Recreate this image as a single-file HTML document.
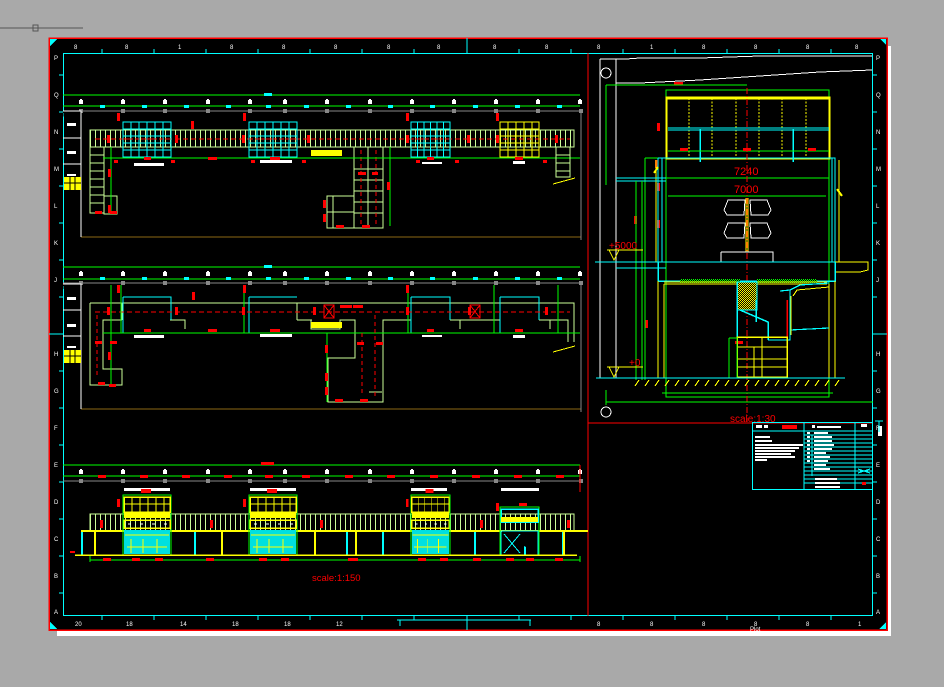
<!DOCTYPE html>
<html><head><meta charset="utf-8"><style>
html,body{margin:0;padding:0;background:#a9a9a9;width:944px;height:687px;overflow:hidden}
svg{display:block}
text{font-family:"Liberation Sans",sans-serif}
</style></head><body>
<svg width="944" height="687" viewBox="0 0 944 687" xmlns="http://www.w3.org/2000/svg" shape-rendering="crispEdges">
<defs>
<g id="gm"><rect x="-2" y="-2" width="4" height="4" fill="#fff"/><rect x="-1" y="-3" width="2" height="1" fill="#fff"/></g>
<g id="cab">
 <rect x="0" y="0" width="48" height="35" fill="none" stroke="#00ffff" stroke-width="1.2"/>
 <path d="M8 0V35M16 0V35M24 0V35M32 0V35M40 0V35M0 7H48M0 14H48M0 21H48M0 28H48" stroke="#00ffff" stroke-width="1"/>
 <path d="M0 17H48" stroke="#ff0000" stroke-dasharray="4 2"/>
</g>
<g id="ecab">
 <rect x="0" y="0" width="48" height="60" fill="none" stroke="#00ff00"/>
 <rect x="1" y="2" width="46" height="15" fill="none" stroke="#ffff00" stroke-width="1.5"/>
 <path d="M9 2V17M17 2V17M25 2V17M33 2V17M41 2V17M1 9H47" stroke="#ffff00"/>
 <rect x="1" y="18" width="46" height="5" fill="#ffff00"/>
 <rect x="1" y="25" width="46" height="8" fill="none" stroke="#ffff00" stroke-width="1.5"/>
 <path d="M5 29h3M17 29h3M29 29h3M41 29h3" stroke="#fff"/>
 <rect x="1" y="35" width="46" height="24" fill="#00e0e0"/>
 <path d="M4 52H44M8 44V58M20 44V58M34 44V58M2 40H46" stroke="#ffff00"/>
 <rect x="-6" y="4" width="3" height="8" fill="#ff0000"/>
 <rect x="18" y="-6" width="10" height="4" fill="#ff0000"/>
</g>
<pattern id="hatch" width="5" height="60" patternUnits="userSpaceOnUse"><rect width="5" height="60" fill="#000"/><rect width="1" height="60" fill="#ccff99"/></pattern>
<pattern id="chk" width="2" height="2" patternUnits="userSpaceOnUse"><rect width="2" height="2" fill="#000"/><rect width="1" height="1" fill="#00ff00"/><rect x="1" y="1" width="1" height="1" fill="#00ff00"/></pattern>
<pattern id="chky" width="2" height="2" patternUnits="userSpaceOnUse"><rect width="2" height="2" fill="#000"/><rect width="1" height="1" fill="#ffff00"/><rect x="1" y="1" width="1" height="1" fill="#ffff00"/></pattern>
</defs>

<line x1="0" y1="28" x2="83" y2="28" stroke="#555" stroke-width="1"/>
<rect x="33" y="25" width="5" height="6" fill="none" stroke="#555"/>

<rect x="57" y="46" width="834" height="590" fill="#fff"/>
<rect x="49" y="38" width="838" height="592" fill="#000"/>
<path d="M49 38H887V630H49Z" fill="none" stroke="#ff0000" stroke-width="1.5"/>
<polygon points="50,39 57,39 50,46" fill="#00ffff"/>
<polygon points="886,629 879,629 886,622" fill="#00ffff"/>
<polygon points="880,39 886,39 886,45" fill="#00ffff"/>
<polygon points="50,629 50,622 57,629" fill="#00ffff"/>

<rect x="63.5" y="53.5" width="809" height="562" fill="none" stroke="#00ffff" stroke-width="1.2"/>
<path d="M467 38V53M467 616V630M49 334H63M873 334H887" stroke="#00ffff"/>
<g stroke="#00ffff">
<path d="M102 49V53M154 49V53M206 49V53M258 49V53M310 49V53M362 49V53M414 49V53M519 49V53M571 49V53M623 49V53M675 49V53M727 49V53M779 49V53M831 49V53"/>
<path d="M102 616V620M154 616V620M206 616V620M258 616V620M310 616V620M362 616V620M414 616V620M519 616V620M571 616V620M623 616V620M675 616V620M727 616V620M779 616V620M831 616V620"/>
<path d="M59 75H63M59 112H63M59 149H63M59 186H63M59 223H63M59 260H63M59 297H63M59 371H63M59 408H63M59 445H63M59 482H63M59 519H63M59 556H63M59 593H63"/>
<path d="M873 75H877M873 112H877M873 149H877M873 186H877M873 223H877M873 260H877M873 297H877M873 371H877M873 408H877M873 445H877M873 482H877M873 519H877M873 556H877M873 593H877"/>
<path d="M397 620H531M400 620V626M530 620V626M467 616V630"/>
</g>
<g fill="#fff" font-size="6">
<text x="74" y="49">8</text><text x="125" y="49">8</text><text x="178" y="49">1</text><text x="230" y="49">8</text><text x="282" y="49">8</text><text x="334" y="49">8</text><text x="387" y="49">8</text><text x="437" y="49">8</text><text x="493" y="49">8</text><text x="545" y="49">8</text><text x="597" y="49">8</text><text x="650" y="49">1</text><text x="702" y="49">8</text><text x="754" y="49">8</text><text x="806" y="49">8</text><text x="855" y="49">8</text>
<text x="75" y="626">20</text><text x="126" y="626">18</text><text x="180" y="626">14</text><text x="232" y="626">18</text><text x="284" y="626">18</text><text x="336" y="626">12</text><text x="597" y="626">8</text><text x="650" y="626">8</text><text x="702" y="626">8</text><text x="754" y="626">8</text><text x="806" y="626">8</text><text x="858" y="626">1</text>
<text x="54" y="60">P</text><text x="54" y="97">Q</text><text x="54" y="134">N</text><text x="54" y="171">M</text><text x="54" y="208">L</text><text x="54" y="245">K</text><text x="54" y="282">J</text><text x="54" y="356">H</text><text x="54" y="393">G</text><text x="54" y="430">F</text><text x="54" y="467">E</text><text x="54" y="504">D</text><text x="54" y="541">C</text><text x="54" y="578">B</text><text x="54" y="614">A</text>
<text x="876" y="60">P</text><text x="876" y="97">Q</text><text x="876" y="134">N</text><text x="876" y="171">M</text><text x="876" y="208">L</text><text x="876" y="245">K</text><text x="876" y="282">J</text><text x="876" y="356">H</text><text x="876" y="393">G</text><text x="876" y="430">F</text><text x="876" y="467">E</text><text x="876" y="504">D</text><text x="876" y="541">C</text><text x="876" y="578">B</text><text x="876" y="614">A</text>
<text x="750" y="631">Plot</text>
</g>

<path d="M588 53V616M588 423H873" stroke="#ff0000" stroke-width="1.2"/>

<g>
<path d="M63 95H580M63 106H580" stroke="#00ff00"/>
<rect x="264" y="93" width="8" height="3" fill="#00ffff"/>
<path d="M63 111H581" stroke="#888"/>
<path d="M81 237H581" stroke="#8b6914"/>
<path d="M581 111V240" stroke="#888"/>
<g id="gridrow">
<use href="#gm" x="81" y="102"/><use href="#gm" x="123" y="102"/><use href="#gm" x="165" y="102"/><use href="#gm" x="208" y="102"/><use href="#gm" x="250" y="102"/><use href="#gm" x="285" y="102"/><use href="#gm" x="327" y="102"/><use href="#gm" x="370" y="102"/><use href="#gm" x="412" y="102"/><use href="#gm" x="454" y="102"/><use href="#gm" x="496" y="102"/><use href="#gm" x="538" y="102"/><use href="#gm" x="580" y="102"/>
<g fill="#00ffff"><rect x="100" y="105" width="5" height="3"/><rect x="142" y="105" width="5" height="3"/><rect x="184" y="105" width="5" height="3"/><rect x="226" y="105" width="5" height="3"/><rect x="266" y="105" width="5" height="3"/><rect x="304" y="105" width="5" height="3"/><rect x="346" y="105" width="5" height="3"/><rect x="388" y="105" width="5" height="3"/><rect x="430" y="105" width="5" height="3"/><rect x="473" y="105" width="5" height="3"/><rect x="515" y="105" width="5" height="3"/><rect x="557" y="105" width="5" height="3"/></g>
<g fill="#888"><rect x="79" y="109" width="4" height="4"/><rect x="121" y="109" width="4" height="4"/><rect x="163" y="109" width="4" height="4"/><rect x="206" y="109" width="4" height="4"/><rect x="248" y="109" width="4" height="4"/><rect x="283" y="109" width="4" height="4"/><rect x="325" y="109" width="4" height="4"/><rect x="368" y="109" width="4" height="4"/><rect x="410" y="109" width="4" height="4"/><rect x="452" y="109" width="4" height="4"/><rect x="494" y="109" width="4" height="4"/><rect x="536" y="109" width="4" height="4"/><rect x="579" y="109" width="4" height="4"/></g>
</g>
<path d="M63 111H81V237M63 138H81M63 164H81M63 164H81" stroke="#fff"/>
<rect x="64" y="177" width="17" height="13" fill="#ffff00"/>
<path d="M70 177V190M75 177V190M64 183H81" stroke="#000"/>
<g fill="#fff"><rect x="67" y="123" width="9" height="3"/><rect x="67" y="151" width="9" height="3"/><rect x="67" y="174" width="9" height="2"/></g>
<rect x="90" y="130" width="484" height="17" fill="url(#hatch)" stroke="#ccff99"/>
<path d="M95 139H570" stroke="#ff0000" stroke-dasharray="5 3"/>
<rect x="90" y="147" width="14" height="66" fill="none" stroke="#ccff99"/>
<path d="M90 155H104M90 163H104M90 171H104M90 179H104M90 187H104M90 195H104M90 203H104" stroke="#ccff99"/>
<rect x="104" y="196" width="13" height="18" fill="none" stroke="#ccff99"/>
<path d="M111 147V213" stroke="#00ff00"/>
<rect x="354" y="147" width="29" height="81" fill="none" stroke="#ccff99"/>
<path d="M354 158H383M354 169H383M354 180H383M354 191H383M354 202H383M354 213H383M368 147V228" stroke="#ccff99"/>
<rect x="327" y="196" width="27" height="32" fill="none" stroke="#ccff99"/>
<path d="M327 212H354M333 196V228" stroke="#ccff99"/>
<path d="M390 147V226" stroke="#00ff00"/>
<path d="M361 150V225M376 150V225" stroke="#ff0000" stroke-dasharray="4 3"/>
<rect x="311" y="150" width="31" height="6" fill="#ffff00"/>
<path d="M103 158H580" stroke="#00ff00"/>
<use href="#cab" x="123" y="122"/><use href="#cab" x="249" y="122"/>
<g transform="translate(411 122) scale(0.81 1)"><use href="#cab"/></g>
<rect x="500" y="122" width="39" height="35" fill="none" stroke="#ffff00" stroke-width="1.2"/>
<path d="M508 122V157M516 122V157M524 122V157M532 122V157M500 129H539M500 136H539M500 143H539M500 150H539" stroke="#ffff00"/>
<rect x="556" y="147" width="14" height="30" fill="none" stroke="#ccff99"/>
<path d="M556 155H570M556 163H570M556 171H570" stroke="#ccff99"/>
<g fill="#ff0000">
<rect x="117" y="113" width="3" height="8"/><rect x="243" y="113" width="3" height="8"/><rect x="406" y="113" width="3" height="8"/><rect x="496" y="113" width="3" height="8"/><rect x="191" y="121" width="3" height="8"/>
<rect x="107" y="135" width="3" height="8"/><rect x="175" y="135" width="3" height="8"/><rect x="242" y="135" width="3" height="8"/><rect x="307" y="135" width="3" height="8"/><rect x="406" y="135" width="3" height="8"/><rect x="467" y="135" width="3" height="8"/><rect x="496" y="135" width="3" height="8"/><rect x="555" y="135" width="3" height="8"/>
<rect x="144" y="157" width="7" height="3"/><rect x="208" y="157" width="9" height="3"/><rect x="270" y="157" width="10" height="3"/><rect x="427" y="157" width="7" height="3"/><rect x="515" y="157" width="8" height="3"/>
<rect x="114" y="160" width="4" height="3"/><rect x="171" y="160" width="4" height="3"/><rect x="251" y="160" width="4" height="3"/><rect x="302" y="160" width="4" height="3"/><rect x="416" y="160" width="4" height="3"/><rect x="455" y="160" width="4" height="3"/><rect x="543" y="160" width="4" height="3"/>
<rect x="108" y="169" width="3" height="8"/><rect x="108" y="205" width="3" height="8"/><rect x="95" y="211" width="7" height="3"/><rect x="110" y="211" width="7" height="3"/>
<rect x="336" y="225" width="8" height="3"/><rect x="362" y="225" width="8" height="3"/><rect x="323" y="200" width="3" height="8"/><rect x="323" y="214" width="3" height="8"/><rect x="387" y="182" width="3" height="8"/><rect x="358" y="172" width="8" height="3"/><rect x="372" y="172" width="6" height="3"/>
</g>
<g fill="#fff"><rect x="134" y="163" width="30" height="3"/><rect x="260" y="160" width="32" height="3"/><rect x="422" y="162" width="20" height="2"/><rect x="513" y="161" width="12" height="3"/></g>
<path d="M553 184L575 178" stroke="#ffff00"/>
</g>

<g>
<path d="M63 267H580M63 279H580" stroke="#00ff00"/>
<rect x="264" y="265" width="8" height="3" fill="#00ffff"/>
<path d="M63 283H581" stroke="#888"/>
<path d="M81 409H581" stroke="#8b6914"/>
<path d="M581 283V412" stroke="#888"/>
<use href="#gridrow" y="172"/>
<path d="M63 284H81V409M63 310H81M63 336H81" stroke="#fff"/>
<rect x="64" y="350" width="17" height="13" fill="#ffff00"/>
<path d="M70 350V363M75 350V363M64 356H81" stroke="#000"/>
<g fill="#fff"><rect x="67" y="297" width="9" height="3"/><rect x="67" y="324" width="9" height="3"/><rect x="67" y="346" width="9" height="2"/></g>
<g fill="none" stroke="#ccff99" stroke-width="1.2">
<path d="M90 303H574V342"/>
<path d="M90 303V385H122V369H103V320H122"/>
<path d="M170 320H185V329M122 320V303"/>
<path d="M297 303V320M297 320H312M311 320V329H340V320H355V358H328V402H383V320H395"/>
<path d="M382 392H369"/>
<path d="M395 320H411M450 320H460V329M460 320H500M539 320H550V329M550 320H568V342"/>
</g>
<path d="M123 297H171V320M249 297H297M411 297H450V320M500 297H539V320" stroke="#00ffff" fill="none"/>
<path d="M123 297V333H171M249 297V333H297M411 297V333H450M500 297V333H539" stroke="#00ffff" fill="none"/>
<path d="M95 312H570" stroke="#ff0000" stroke-dasharray="5 3"/>
<path d="M103 333H580" stroke="#00ff00"/>
<path d="M111 285V385M327 333V402M121 285V333M244 285V333M408 285V333M494 285V333M558 285V333" stroke="#00ff00"/>
<path d="M97 315V378M375 315V397M362 333V395" stroke="#ff0000" stroke-dasharray="4 3"/>
<rect x="311" y="322" width="31" height="6" fill="#ffff00"/>
<rect x="324" y="305" width="10" height="13" fill="none" stroke="#ff0000"/>
<path d="M324 305L334 318M334 305L324 318" stroke="#ff0000"/>
<rect x="470" y="305" width="10" height="13" fill="none" stroke="#ff0000"/>
<path d="M470 305L480 318M480 305L470 318" stroke="#ff0000"/>
<g fill="#ff0000">
<rect x="117" y="285" width="3" height="8"/><rect x="243" y="285" width="3" height="8"/><rect x="406" y="285" width="3" height="8"/><rect x="192" y="292" width="3" height="8"/>
<rect x="107" y="307" width="3" height="8"/><rect x="175" y="307" width="3" height="8"/><rect x="242" y="307" width="3" height="8"/><rect x="313" y="307" width="3" height="8"/><rect x="406" y="307" width="3" height="8"/><rect x="468" y="307" width="3" height="8"/><rect x="545" y="307" width="3" height="8"/>
<rect x="340" y="305" width="12" height="3"/><rect x="353" y="305" width="10" height="3"/>
<rect x="144" y="329" width="7" height="3"/><rect x="208" y="329" width="9" height="3"/><rect x="270" y="329" width="10" height="3"/><rect x="427" y="329" width="7" height="3"/><rect x="515" y="329" width="8" height="3"/>
<rect x="95" y="341" width="7" height="3"/><rect x="110" y="341" width="7" height="3"/><rect x="357" y="342" width="7" height="3"/><rect x="376" y="342" width="7" height="3"/>
<rect x="108" y="352" width="3" height="8"/><rect x="98" y="382" width="7" height="3"/><rect x="109" y="384" width="7" height="3"/>
<rect x="325" y="345" width="3" height="8"/><rect x="325" y="373" width="3" height="8"/><rect x="325" y="387" width="3" height="8"/><rect x="335" y="399" width="8" height="3"/><rect x="360" y="399" width="8" height="3"/>
</g>
<g fill="#fff"><rect x="134" y="335" width="30" height="3"/><rect x="260" y="334" width="32" height="3"/><rect x="422" y="335" width="20" height="2"/><rect x="513" y="335" width="12" height="3"/></g>
<path d="M553 352L575 346" stroke="#ffff00"/>
</g>

<g>
<path d="M63 465H580M63 476H580" stroke="#00ff00"/>
<rect x="261" y="462" width="13" height="3" fill="#ff0000"/>
<path d="M63 481H581" stroke="#888"/>
<use href="#gridrow" y="370"/>
<g fill="#ff0000"><rect x="98" y="475" width="8" height="3"/><rect x="140" y="475" width="8" height="3"/><rect x="182" y="475" width="8" height="3"/><rect x="224" y="475" width="8" height="3"/><rect x="265" y="475" width="8" height="3"/><rect x="302" y="475" width="8" height="3"/><rect x="345" y="475" width="8" height="3"/><rect x="387" y="475" width="8" height="3"/><rect x="430" y="475" width="8" height="3"/><rect x="472" y="475" width="8" height="3"/><rect x="514" y="475" width="8" height="3"/><rect x="556" y="475" width="8" height="3"/></g>
<g fill="#fff"><rect x="124" y="488" width="46" height="3"/><rect x="250" y="488" width="46" height="3"/><rect x="411" y="488" width="36" height="3"/><rect x="501" y="488" width="38" height="3"/></g>
<rect x="90" y="514" width="484" height="17" fill="url(#hatch)" stroke="#ccff99"/>
<rect x="81" y="530" width="507" height="2" fill="#ffff00"/>
<g stroke-width="2"><path d="M82 532V555M195 532V555M347 532V555M383 532V555M475 532V555M525 532V555M563 532V555" stroke="#00ffff"/><path d="M95 532V555M222 532V555M315 532V555M356 532V555M564 532V555" stroke="#ffff00"/></g>
<use href="#ecab" x="123" y="495"/><use href="#ecab" x="249" y="495"/>
<g transform="translate(411 495) scale(0.81 1)"><use href="#ecab"/></g>
<rect x="500" y="507" width="39" height="48" fill="none" stroke="#00ff00"/>
<rect x="501" y="509" width="37" height="13" fill="none" stroke="#00ffff" stroke-width="1.5"/>
<rect x="501" y="517" width="37" height="5" fill="#ffff00"/>
<path d="M501 531H538V555M501 531V555M504 534L520 553M520 534L504 553" stroke="#00ffff"/>
<path d="M75 555H577" stroke="#ffff00" stroke-width="1.5"/>
<path d="M90 560H580M90 556V562M580 556V562" stroke="#00ff00"/>
<g fill="#ff0000"><rect x="103" y="558" width="8" height="3"/><rect x="132" y="558" width="8" height="3"/><rect x="155" y="558" width="8" height="3"/><rect x="206" y="558" width="8" height="3"/><rect x="259" y="558" width="8" height="3"/><rect x="281" y="558" width="8" height="3"/><rect x="348" y="558" width="10" height="3"/><rect x="418" y="558" width="8" height="3"/><rect x="440" y="558" width="8" height="3"/><rect x="473" y="558" width="8" height="3"/><rect x="506" y="558" width="8" height="3"/><rect x="526" y="558" width="8" height="3"/><rect x="555" y="558" width="8" height="3"/><rect x="70" y="551" width="5" height="2"/></g>
<g fill="#ff0000"><rect x="100" y="520" width="3" height="8"/><rect x="210" y="520" width="3" height="8"/><rect x="320" y="520" width="3" height="8"/><rect x="480" y="520" width="3" height="8"/><rect x="567" y="520" width="3" height="8"/><rect x="496" y="503" width="3" height="8"/><rect x="519" y="503" width="8" height="3"/></g>
<path d="M580 465V492" stroke="#ff0000"/>
<text x="312" y="581" fill="#ff0000" font-size="9.5">scale:1:150</text>
</g>

<g fill="none">
<path d="M600 59V378M616 59V378" stroke="#fff"/>
<path d="M600 59H626L640 58H700L760 56H872" stroke="#fff"/>
<path d="M616 83H640L700 80L760 76L820 72L872 70" stroke="#fff"/>
<circle cx="606" cy="73" r="5" stroke="#fff"/>
<circle cx="606" cy="412" r="5" stroke="#fff"/>
<rect x="674" y="82" width="9" height="3" fill="#ff0000" stroke="none"/>
<path d="M606 85H747M606 85V185" stroke="#00ff00"/>
<rect x="666" y="90" width="163" height="307" stroke="#00ff00"/>
<rect x="666.5" y="97.5" width="163" height="61" stroke="#ffff00" stroke-width="2"/>
<path d="M666 98H829" stroke="#ffff00" stroke-width="3"/>
<path d="M689 98V158M712 98V158M736 98V158M759 98V158M782 98V158M806 98V158" stroke="#ffff00" stroke-dasharray="2 1.5"/>
<path d="M668 128H829M668 130H829" stroke="#00ffff"/>
<path d="M700 129V162M793 129V162" stroke="#00ffff" stroke-width="1.5"/>
<path d="M668 151H829" stroke="#00ff00"/>
<g fill="#ff0000" stroke="none"><rect x="680" y="148" width="8" height="3"/><rect x="743" y="148" width="8" height="3"/><rect x="808" y="148" width="8" height="3"/><rect x="657" y="123" width="3" height="8"/><rect x="655" y="160" width="3" height="8"/><rect x="657" y="183" width="3" height="8"/><rect x="634" y="216" width="3" height="8"/><rect x="657" y="220" width="3" height="8"/><rect x="645" y="320" width="3" height="8"/><rect x="735" y="341" width="8" height="3"/></g>
<path d="M645 158V380" stroke="#00ff00"/>
<path d="M645 158H658" stroke="#00ff00"/>
<path d="M658 158H835V262M658 158V262" stroke="#00ffff" stroke-width="1.2"/>
<path d="M662 158V262M832 158V262" stroke="#00ffff"/>
<path d="M656 160V262M839 160V262" stroke="#ffff00" stroke-width="1.2"/>
<path d="M616 178H666M616 181H666" stroke="#00ffff"/>
<path d="M636 181V380M642 181V380" stroke="#00ff00"/>
<path d="M666 178H829M668 196H826" stroke="#00ff00"/>
<text x="734" y="175" fill="#ff0000" font-size="11" stroke="none">7240</text>
<text x="734" y="193" fill="#ff0000" font-size="11" stroke="none">7000</text>
<path d="M747 88V422" stroke="#ff0000" stroke-dasharray="6 2 1 2"/>
<path d="M728 200L745 200L744 215H727L724 210ZM750 200H767L771 210L768 215H751Z" stroke="#fff"/>
<path d="M728 223L745 223L744 238H727L724 233ZM750 223H767L771 233L768 238H751Z" stroke="#fff"/>
<path d="M746 198V252M748 198V252" stroke="#ffff00"/>
<path d="M721 252H773V262M721 252V262" stroke="#fff"/>
<path d="M658 167L654 173M837 189L842 196" stroke="#ffff00" stroke-width="2"/>
<text x="609" y="249" fill="#ff0000" font-size="10" stroke="none">+5000</text>
<path d="M607 250H643M609 250L614 260L619 250" stroke="#ffff00"/>
<path d="M595 262H868M616 268H666" stroke="#00ffff" stroke-width="1.2"/>
<path d="M835 262H868V270L860 272H835" stroke="#ffff00"/>
<path d="M658 262V281H835V262" stroke="#00ffff" stroke-width="1.5"/>
<rect x="680" y="279" width="60" height="4" fill="url(#chk)" stroke="none"/>
<rect x="757" y="279" width="60" height="4" fill="url(#chk)" stroke="none"/>
<path d="M664 282H827M664 284H827" stroke="#ffff00"/>
<path d="M658 281V378M664 284V378M835 281V378M829 284V378" stroke="#ffff00" stroke-width="1.2"/>
<rect x="737" y="282" width="20" height="28" fill="url(#chky)" stroke="#00ffff"/>
<path d="M737 282V337M740 310L768 322L768 340M756 300V322" stroke="#00ffff" stroke-width="1.5"/>
<path d="M768 340H790V330L829 328M780 291L790 290V330M790 290L800 285L829 283" stroke="#00ffff" stroke-width="1.2"/>
<path d="M787 300V340" stroke="#ff0000" stroke-width="1.5"/>
<path d="M793 296L797 290L829 287M791 335V296" stroke="#ffff00"/>
<rect x="737" y="337" width="50" height="40" stroke="#ffff00" stroke-width="1.5"/>
<path d="M737 347H787M737 359H787M737 367H787M762 337V377M754 347V377" stroke="#ffff00"/>
<path d="M729 338H737V378M729 338V378" stroke="#00ff00"/>
<text x="629" y="366" fill="#ff0000" font-size="10" stroke="none">+0</text>
<path d="M607 367H643M609 367L614 377L619 367" stroke="#ffff00"/>
<path d="M596 378H845" stroke="#00ffff" stroke-width="1.2"/>
<path d="M635 386L639 380M645 386L649 380M655 386L659 380M665 386L669 380M675 386L679 380M685 386L689 380M695 386L699 380M705 386L709 380M715 386L719 380M725 386L729 380M735 386L739 380M745 386L749 380M755 386L759 380M765 386L769 380M775 386L779 380M785 386L789 380M795 386L799 380M805 386L809 380M815 386L819 380M825 386L829 380M835 386L839 380" stroke="#ffff00"/>
<path d="M662 393H833M606 402H873M606 390V405" stroke="#00ff00"/>
<path d="M873 334H880" stroke="#00ffff"/>
<text x="730" y="422" fill="#ff0000" font-size="10" stroke="none">scale:1:30</text>
</g>

<g>
<rect x="752.5" y="422.5" width="120" height="67" fill="none" stroke="#00ffff"/>
<path d="M804 423V490M855 423V490M752 431H873" stroke="#00ffff"/>
<path d="M804 435H873M804 439H873M804 443H873M804 447H873M804 451H873M804 455H873M804 459H873M804 463H873M804 467H873M804 471H873M804 475H873M804 479H873M804 483H873M812 435V476" stroke="#00ffff"/>
<path d="M858 469L870 473M858 473L870 469" stroke="#00ffff"/>
<g fill="#fff"><rect x="756" y="425" width="6" height="3"/><rect x="764" y="425" width="4" height="3"/><rect x="812" y="425" width="3" height="3"/><rect x="817" y="426" width="24" height="2"/><rect x="861" y="424" width="6" height="3"/>
<rect x="755" y="436" width="15" height="2"/><rect x="755" y="440" width="17" height="2"/>
<rect x="755" y="444" width="48" height="2"/><rect x="755" y="447" width="44" height="2"/><rect x="755" y="450" width="40" height="2"/><rect x="755" y="453" width="36" height="2"/><rect x="755" y="456" width="40" height="2"/><rect x="755" y="459" width="12" height="2"/>
<rect x="814" y="432" width="14" height="2"/><rect x="814" y="436" width="18" height="2"/><rect x="814" y="440" width="18" height="2"/><rect x="814" y="444" width="20" height="2"/><rect x="814" y="448" width="18" height="2"/><rect x="814" y="452" width="12" height="2"/><rect x="814" y="456" width="16" height="2"/><rect x="814" y="460" width="14" height="2"/><rect x="814" y="464" width="12" height="2"/><rect x="814" y="468" width="16" height="2"/>
<rect x="815" y="478" width="22" height="2"/><rect x="815" y="482" width="25" height="2"/><rect x="815" y="486" width="25" height="2"/>
<rect x="807" y="432" width="3" height="2"/><rect x="807" y="436" width="3" height="2"/><rect x="807" y="440" width="3" height="2"/><rect x="807" y="444" width="3" height="2"/><rect x="807" y="448" width="3" height="2"/><rect x="807" y="452" width="3" height="2"/><rect x="807" y="456" width="3" height="2"/><rect x="807" y="460" width="3" height="2"/>
<rect x="878" y="426" width="4" height="10"/></g>
<rect x="782" y="425" width="15" height="4" fill="#ff0000"/>
<rect x="862" y="482" width="4" height="3" fill="#ff0000"/>
<path d="M875 421H883M879 421V432" stroke="#00ffff"/>
</g>
</svg>
</body></html>
